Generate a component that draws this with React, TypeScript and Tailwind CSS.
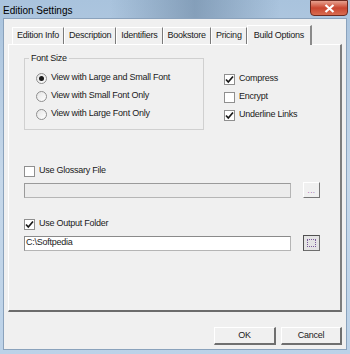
import React from "react";

const font = { fontFamily: '"Liberation Sans", Arial, sans-serif' };

const Radio = ({ checked, label }: { checked?: boolean; label: string }) => (
    <div className="flex items-center h-[18px]">
        <span className="w-[11px] h-[11px] rounded-full border border-[#8f8f8f] bg-gradient-to-br from-[#e4e4e4] to-[#ffffff] flex items-center justify-center">
            {checked && <span className="w-[5px] h-[5px] rounded-full bg-[#1a1a1a]" />}
        </span>
        <span className="ml-[4px] text-[#1a1a1a]">{label}</span>
    </div>
);

const Check = ({ checked, label }: { checked?: boolean; label: string }) => (
    <div className="flex items-center h-[18px]">
        <span className="w-[11px] h-[11px] border border-[#8f8f8f] bg-white flex items-center justify-center">
            {checked && (
                <svg width="9" height="9" viewBox="0 0 9 9">
                    <path d="M1 4.5 L3.3 7 L8 1.5" fill="none" stroke="#1a1a1a" strokeWidth="1.7" />
                </svg>
            )}
        </span>
        <span className="ml-[4px] text-[#1a1a1a]">{label}</span>
    </div>
);

const Tab = ({ label, active }: { label: string; active?: boolean }) => (
    <div
        className={
            active
                ? "h-[20px] px-[6px] flex items-center border-t border-l border-white border-r-2 border-r-[#8a8a8a] bg-[#f0f0f0] -mb-[1px] relative z-10"
                : "h-[17px] px-[4px] flex items-center border-t border-l border-white border-r border-r-[#7a7a7a] bg-[#f0f0f0]"
        }
    >
        {label}
    </div>
);

const SmallBtn = ({ pressed }: { pressed?: boolean }) => (
    <div
        className={
            pressed
                ? "w-[17px] h-[16px] border border-[#6e6e6e] border-t-[#505050] border-l-[#505050] bg-[#e4e4e4] flex items-center justify-center"
                : "w-[17px] h-[16px] border border-white border-r-[#777] border-b-[#777] bg-[#f0f0f0] flex items-end justify-center pb-[2px]"
        }
    >
        {pressed ? (
            <span className="w-[9px] h-[8px] border border-dotted border-[#7a5a9a]" />
        ) : (
            <span className="text-[8px] leading-none text-[#8a4aa0] tracking-[0.5px]">...</span>
        )}
    </div>
);

const App = () => {
    return (
        <div
            className="w-[350px] h-[354px] bg-gradient-to-b from-[#a9c3dd] via-[#c6d8ea] to-[#bcd2e8] flex flex-col text-[9px] tracking-[-0.25px] text-[#1a1a1a] overflow-hidden"
            style={font}
        >
            <div className="h-[18px] flex items-start relative">
                <div className="absolute left-[110px] top-0 w-[170px] h-[18px] bg-gradient-to-r from-transparent via-[#5f7a96]/50 to-transparent" />
                <span className="ml-[3px] mt-[3px] text-[10px] tracking-normal text-black relative">Edition Settings</span>
                <div className="ml-auto mr-[2px] w-[38px] h-[16px] rounded-b-[4px] border border-[#6b2a20] bg-gradient-to-b from-[#e6a08e] via-[#c9452f] to-[#d86c50] flex items-center justify-center relative">
                    <svg width="11" height="9" viewBox="0 0 11 9">
                        <path d="M1.5 1 L9.5 8 M9.5 1 L1.5 8" stroke="#fff" strokeWidth="2.2" />
                    </svg>
                </div>
            </div>

            <div className="flex-1 mx-[3px] mb-[4px] border border-[#8aa2bc] bg-[#f0f0f0] flex flex-col">
                <div className="flex items-end ml-[8px] mt-[5px] h-[20px]">
                    <Tab label="Edition Info" />
                    <Tab label="Description" />
                    <Tab label="Identifiers" />
                    <Tab label="Bookstore" />
                    <Tab label="Pricing" />
                    <Tab label="Build Options" active />
                </div>

                <div className="mx-[4px] h-[268px] border-t border-l border-white border-r-2 border-r-[#7d7d7d] border-b-2 border-b-[#6c6c6c] flex flex-col px-[15px]">
                    <div className="flex mt-[13px]">
                        <div className="w-[180px] h-[72px] border border-[#d0d0d0] relative pl-[11px] pt-[10px]">
                            <span className="absolute -top-[7px] left-[4px] px-[2px] bg-[#f0f0f0]">Font Size</span>
                            <Radio checked label="View with Large and Small Font" />
                            <Radio label="View with Small Font Only" />
                            <Radio label="View with Large Font Only" />
                        </div>
                        <div className="ml-[20px] pt-[12px]">
                            <Check checked label="Compress" />
                            <Check label="Encrypt" />
                            <Check checked label="Underline Links" />
                        </div>
                    </div>

                    <div className="mt-[32px]">
                        <Check label="Use Glossary File" />
                    </div>
                    <div className="flex items-center mt-[2px]">
                        <div className="w-[267px] h-[15px] border border-[#b5b5b5] border-t-[#9a9a9a] border-l-[#9a9a9a] bg-[#ececec]" />
                        <div className="ml-[12px]">
                            <SmallBtn />
                        </div>
                    </div>

                    <div className="mt-[17px]">
                        <Check checked label="Use Output Folder" />
                    </div>
                    <div className="flex items-center mt-[2px]">
                        <div className="w-[267px] h-[15px] border border-[#b5b5b5] border-t-[#8a8a8a] border-l-[#8a8a8a] bg-white flex items-center pl-[1px]">
                            C:\Softpedia
                        </div>
                        <div className="ml-[12px]">
                            <SmallBtn pressed />
                        </div>
                    </div>
                </div>

                <div className="flex justify-end gap-[5px] mr-[4px] mt-[15px]">
                    <button className="w-[62px] h-[18px] border border-white border-r-2 border-b-2 border-r-[#6f6f6f] border-b-[#6f6f6f] bg-[#f0f0f0]">OK</button>
                    <button className="w-[61px] h-[18px] border border-white border-r-2 border-b-2 border-r-[#6f6f6f] border-b-[#6f6f6f] bg-[#f0f0f0]">Cancel</button>
                </div>
            </div>
        </div>
    );
};

export default App;
